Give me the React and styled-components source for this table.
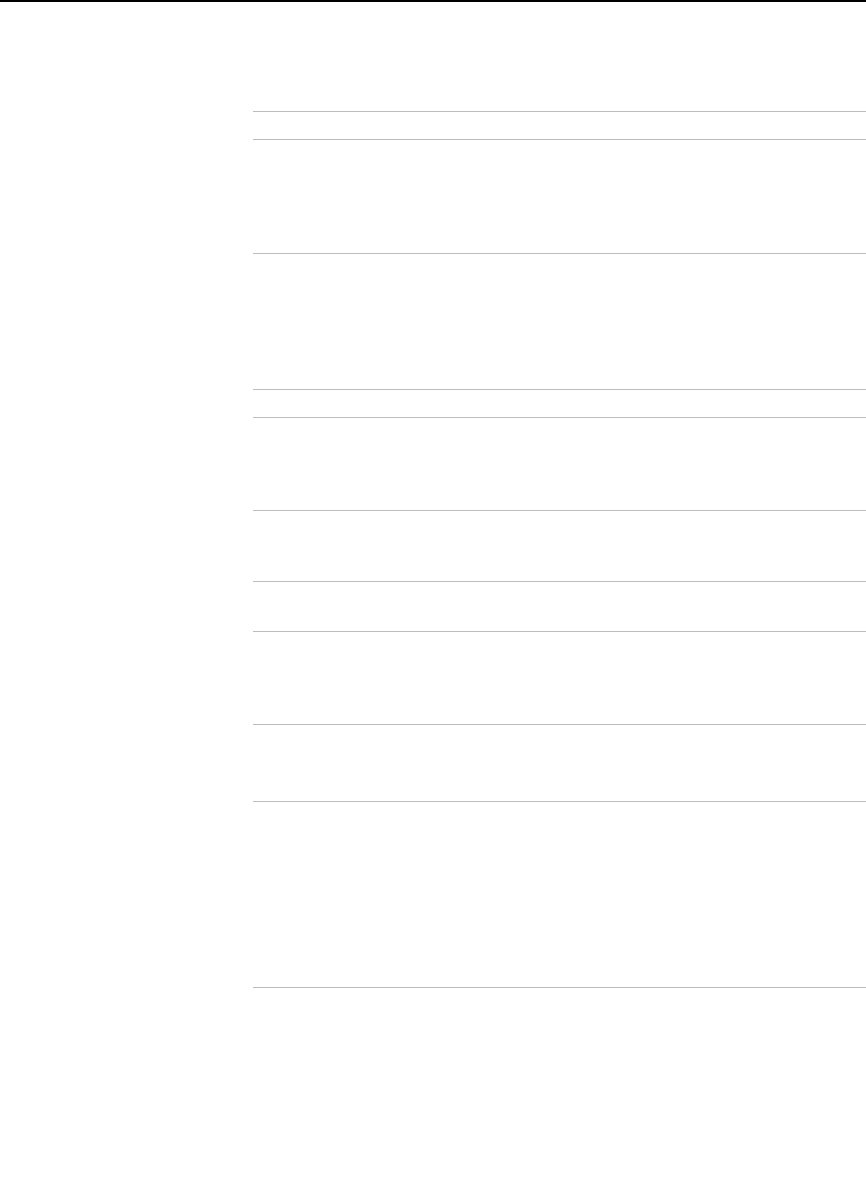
import React from "react";
import styled, { createGlobalStyle } from "styled-components";

const GlobalStyle = createGlobalStyle`
  html, body {
    margin: 0;
    padding: 0;
    background: #ffffff;
    font-family: "Liberation Sans", Arial, sans-serif;
  }
`;

const Page = styled.div`
  width: 100%;
  min-height: 1179px;
  display: flex;
  flex-direction: column;
`;

const TopBar = styled.header`
  height: 2px;
  background-color: #000000;
`;

const Body = styled.div`
  display: grid;
  grid-template-columns: 253px 1fr;
  padding-top: 109px;
`;

const Sidebar = styled.aside``;

const Main = styled.main`
  display: flex;
  flex-direction: column;
`;

const Section = styled.section`
  height: ${({ $h }) => $h}px;
  box-sizing: border-box;
  border-top: 1px solid #bdbdbd;
`;

const rows = [28, 114, 136, 28, 93, 71, 50, 93, 77, 186, 1];

const App = () => {
  return (
    <Page>
      <GlobalStyle />
      <TopBar />
      <Body>
        <Sidebar />
        <Main>
          {rows.map((h, i) => (
            <Section key={i} $h={h} />
          ))}
        </Main>
      </Body>
    </Page>
  );
};

export default App;
